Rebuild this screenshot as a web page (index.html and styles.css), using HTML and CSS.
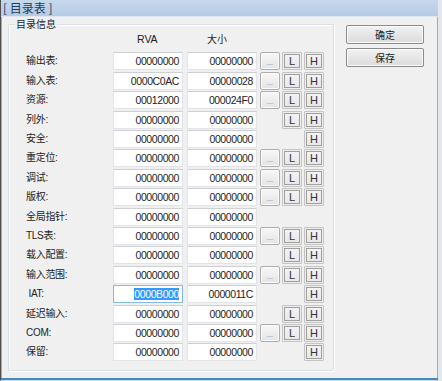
FILE: index.html
```html
<!DOCTYPE html>
<html>
<head>
    <title>目录表</title>
    <link rel="stylesheet" href="styles.css">
</head>
<body>
    <div class="window">
        <div class="titlebar">[ 目录表 ]</div>
        <div class="client">
            <fieldset class="group">
                <legend>目录信息</legend>
                <div class="table">
                    <div class="lbl"></div>
                    <div class="head rva">RVA</div>
                    <div class="head size">大小</div>

                    <div class="lbl">输出表:</div>
                    <div class="fld">00000000</div><div class="fld">00000000</div>
                    <div class="b dots">...</div><div class="b lh l">L</div><div class="b lh h">H</div>

                    <div class="lbl">输入表:</div>
                    <div class="fld">0000C0AC</div><div class="fld">00000028</div>
                    <div class="b dots">...</div><div class="b lh l">L</div><div class="b lh h">H</div>

                    <div class="lbl">资源:</div>
                    <div class="fld">00012000</div><div class="fld">000024F0</div>
                    <div class="b dots">...</div><div class="b lh l">L</div><div class="b lh h">H</div>

                    <div class="lbl">列外:</div>
                    <div class="fld">00000000</div><div class="fld">00000000</div>
                    <div class="b lh l">L</div><div class="b lh h">H</div>

                    <div class="lbl">安全:</div>
                    <div class="fld">00000000</div><div class="fld">00000000</div>
                    <div class="b lh h">H</div>

                    <div class="lbl">重定位:</div>
                    <div class="fld">00000000</div><div class="fld">00000000</div>
                    <div class="b dots">...</div><div class="b lh l">L</div><div class="b lh h">H</div>

                    <div class="lbl">调试:</div>
                    <div class="fld">00000000</div><div class="fld">00000000</div>
                    <div class="b dots">...</div><div class="b lh l">L</div><div class="b lh h">H</div>

                    <div class="lbl">版权:</div>
                    <div class="fld">00000000</div><div class="fld">00000000</div>
                    <div class="b dots">...</div><div class="b lh l">L</div><div class="b lh h">H</div>

                    <div class="lbl">全局指针:</div>
                    <div class="fld">00000000</div><div class="fld">00000000</div>

                    <div class="lbl">TLS表:</div>
                    <div class="fld">00000000</div><div class="fld">00000000</div>
                    <div class="b dots">...</div><div class="b lh l">L</div><div class="b lh h">H</div>

                    <div class="lbl">载入配置:</div>
                    <div class="fld">00000000</div><div class="fld">00000000</div>
                    <div class="b lh l">L</div><div class="b lh h">H</div>

                    <div class="lbl">输入范围:</div>
                    <div class="fld">00000000</div><div class="fld">00000000</div>
                    <div class="b dots">...</div><div class="b lh l">L</div><div class="b lh h">H</div>

                    <div class="lbl">&nbsp;IAT:</div>
                    <div class="fld sel"><span class="hl">0000B000</span></div><div class="fld">0000011C</div>
                    <div class="b lh h">H</div>

                    <div class="lbl">延迟输入:</div>
                    <div class="fld">00000000</div><div class="fld">00000000</div>
                    <div class="b lh l">L</div><div class="b lh h">H</div>

                    <div class="lbl">COM:</div>
                    <div class="fld">00000000</div><div class="fld">00000000</div>
                    <div class="b dots">...</div><div class="b lh l">L</div><div class="b lh h">H</div>

                    <div class="lbl">保留:</div>
                    <div class="fld">00000000</div><div class="fld">00000000</div>
                    <div class="b lh h">H</div>
                </div>
            </fieldset>
            <div class="side">
                <div class="btn">确定</div>
                <div class="btn">保存</div>
            </div>
        </div>
    </div>
</body>
</html>
```

FILE: styles.css
```css
body {
    margin: 0;
    font-family: "Noto Sans CJK SC", "Liberation Sans", sans-serif;
    color: #222;
}
.window {
    width: 442px;
    height: 381px;
    box-sizing: border-box;
    display: flex;
    flex-direction: column;
    background: #f0f0f0;
    border-left: 1px solid #4f4f4f;
    border-right: 4px solid #e4e8ec;
    border-bottom: 1px solid #d8d8d8;
    box-shadow: inset 1px 0 0 #a8a8a8, inset -1px 0 0 #9aabbd;
}
.titlebar {
    height: 16px;
    line-height: 16px;
    padding-left: 2px;
    font-size: 12px;
    color: #1f3a5c;
    background: linear-gradient(#c6d8ec, #b5cbe5);
    border-bottom: 1px solid #dfe8f2;
}
.client {
    flex: 1;
    display: flex;
    align-items: flex-start;
    padding: 1px 0 0 7px;
    border-bottom: 2px solid #3b8cc4;
}
.group {
    margin: 0;
    width: 326px;
    height: 353px;
    box-sizing: border-box;
    padding: 3px 0 0 17px;
    border: 1px solid #d5dfe5;
    border-radius: 2px;
    box-shadow: inset 1px 1px 0 #fff, 1px 1px 0 #fff;
}
.group legend {
    margin-left: -11px;
    padding: 0 1px;
    font-size: 10px;
    line-height: 12px;
    background: #f0f0f0;
}
.table {
    display: grid;
    grid-template-columns: 87px 74px 73px 22px 22px 20px;
    grid-template-rows: 18.1px;
    grid-auto-rows: 18px;
    row-gap: 1.4px;
}
.head {
    font-family: "Liberation Sans", "Noto Sans CJK SC", sans-serif;
    font-size: 10.5px;
    line-height: 12px;
}
.rva {
    padding-left: 24px;
}
.size {
    padding-left: 20px;
    font-family: "Noto Sans CJK SC", sans-serif;
    font-size: 10px;
}
.lbl {
    grid-column: 1;
    font-size: 10px;
    line-height: 18px;
    letter-spacing: -0.3px;
    font-family: "Liberation Sans", "Noto Sans CJK SC", sans-serif;
}
.fld {
    width: 70px;
    height: 18px;
    box-sizing: border-box;
    border: 1px solid #e3e4e9;
    border-top-color: #cfd0d5;
    background: #fff;
    text-align: right;
    padding-right: 3px;
    font-family: "Liberation Sans", sans-serif;
    font-size: 10.5px;
    letter-spacing: -0.4px;
    line-height: 16px;
    color: #222;
}
.fld.sel {
    border-color: #86b8e8;
}
.hl {
    display: inline-block;
    line-height: 12px;
    background: #3399ff;
    color: #fff;
}
.b {
    width: 20px;
    height: 18px;
    box-sizing: border-box;
    text-align: center;
    font-family: "Liberation Sans", sans-serif;
}
.dots {
    grid-column: 4;
    border: 1px solid #adadad;
    border-radius: 2px;
    background: linear-gradient(#f7f7f7, #e4e4e4);
    box-shadow: inset 0 0 0 1px #fbfbfb;
    font-size: 7px;
    line-height: 20px;
    color: #666;
}
.lh {
    border: 1px solid #c4c4c4;
    border-radius: 1px;
    background: linear-gradient(#f5f5f5, #e6e6e6);
    box-shadow: inset 0 0 0 1px #eeeeee, inset 0 0 0 2px #9f9f9f;
    font-size: 11px;
    line-height: 16px;
    color: #333;
}
.l {
    grid-column: 5;
}
.h {
    grid-column: 6;
}
.side {
    margin: 7px 0 0 12px;
    display: flex;
    flex-direction: column;
    gap: 4px;
}
.btn {
    width: 78px;
    height: 19px;
    box-sizing: border-box;
    border: 1px solid #8a8a8a;
    border-radius: 2px;
    background: linear-gradient(#f2f2f2, #e6e6e6 50%, #dcdcdc);
    box-shadow: inset 0 0 0 1px #fbfbfb;
    text-align: center;
    font-size: 10px;
    line-height: 17px;
}
```
